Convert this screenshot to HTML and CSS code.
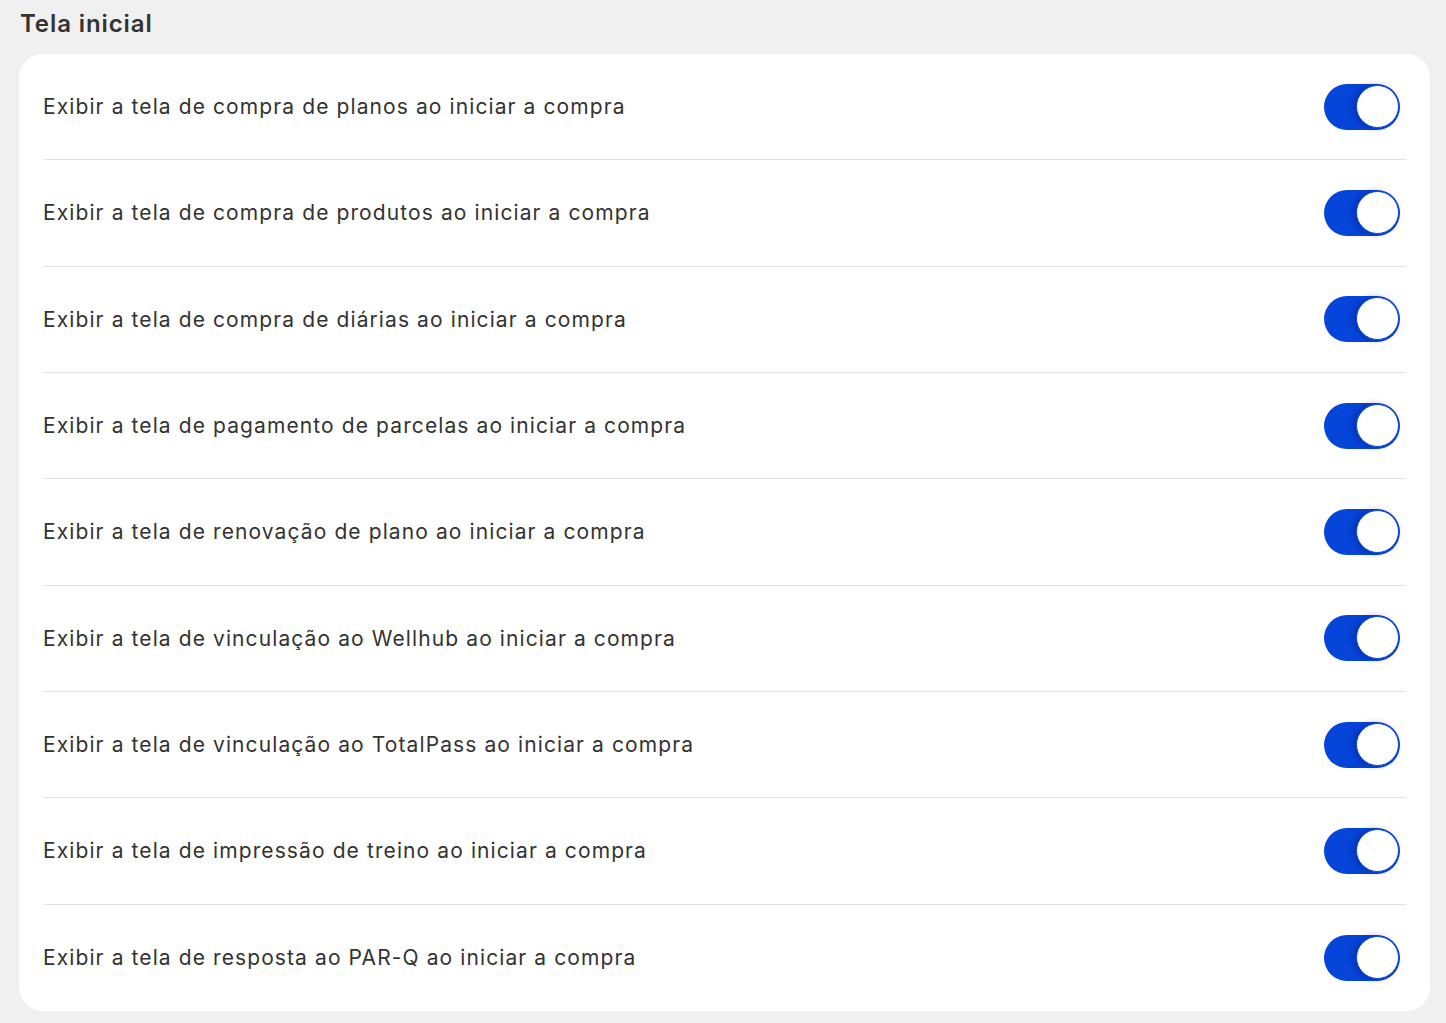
FILE: index.html
```html
<!DOCTYPE html>
<html lang="pt-BR">
<head>
<meta charset="utf-8">
<title>Tela inicial</title>
<link rel="stylesheet" href="styles.css">
</head>
<body>
<main class="page">
  <h2 class="section-title">Tela inicial</h2>
  <section class="card">
    <div class="row"><span class="label">Exibir a tela de compra de planos ao iniciar a compra</span><span class="toggle"><span class="knob"></span></span></div>
    <div class="row"><span class="label">Exibir a tela de compra de produtos ao iniciar a compra</span><span class="toggle"><span class="knob"></span></span></div>
    <div class="row"><span class="label">Exibir a tela de compra de diárias ao iniciar a compra</span><span class="toggle"><span class="knob"></span></span></div>
    <div class="row"><span class="label">Exibir a tela de pagamento de parcelas ao iniciar a compra</span><span class="toggle"><span class="knob"></span></span></div>
    <div class="row"><span class="label">Exibir a tela de renovação de plano ao iniciar a compra</span><span class="toggle"><span class="knob"></span></span></div>
    <div class="row"><span class="label">Exibir a tela de vinculação ao Wellhub ao iniciar a compra</span><span class="toggle"><span class="knob"></span></span></div>
    <div class="row"><span class="label">Exibir a tela de vinculação ao TotalPass ao iniciar a compra</span><span class="toggle"><span class="knob"></span></span></div>
    <div class="row"><span class="label">Exibir a tela de impressão de treino ao iniciar a compra</span><span class="toggle"><span class="knob"></span></span></div>
    <div class="row"><span class="label">Exibir a tela de resposta ao PAR-Q ao iniciar a compra</span><span class="toggle"><span class="knob"></span></span></div>
  </section>
</main>
</body>
</html>
```
FILE: styles.css
```css
html, body {
  margin: 0;
  padding: 0;
  background: #f0f0f0;
}
body {
  font-family: Inter, "Noto Sans", sans-serif;
  color: #333333;
}
.page {
  padding: 8px 16px 12px 19px;
}
.section-title {
  margin: 0 0 14px 1px;
  font-size: 24px;
  line-height: 32px;
  font-weight: 600;
  color: #333333;
  letter-spacing: 0.9px;
}
.card {
  background: #ffffff;
  border-radius: 24px;
  padding: 0 24px;
}
.row {
  box-sizing: border-box;
  height: 106.33px;
  display: flex;
  align-items: center;
  justify-content: space-between;
  border-bottom: 1px solid #e2e2e2;
}
.row:last-child {
  border-bottom: none;
}
.label {
  font-size: 21px;
  letter-spacing: 1.1px;
  color: #333333;
  font-weight: 400;
}
.toggle {
  position: relative;
  width: 76px;
  height: 46px;
  border-radius: 23px;
  background: #0645da;
  margin-right: 6px;
  flex-shrink: 0;
}
.knob {
  position: absolute;
  top: 1px;
  right: 1px;
  width: 41px;
  height: 41px;
  border-radius: 50%;
  background: #ffffff;
  border: 1.5px solid #0645da;
  box-shadow: -3px 0 6px rgba(0, 20, 80, 0.35);
}
```
